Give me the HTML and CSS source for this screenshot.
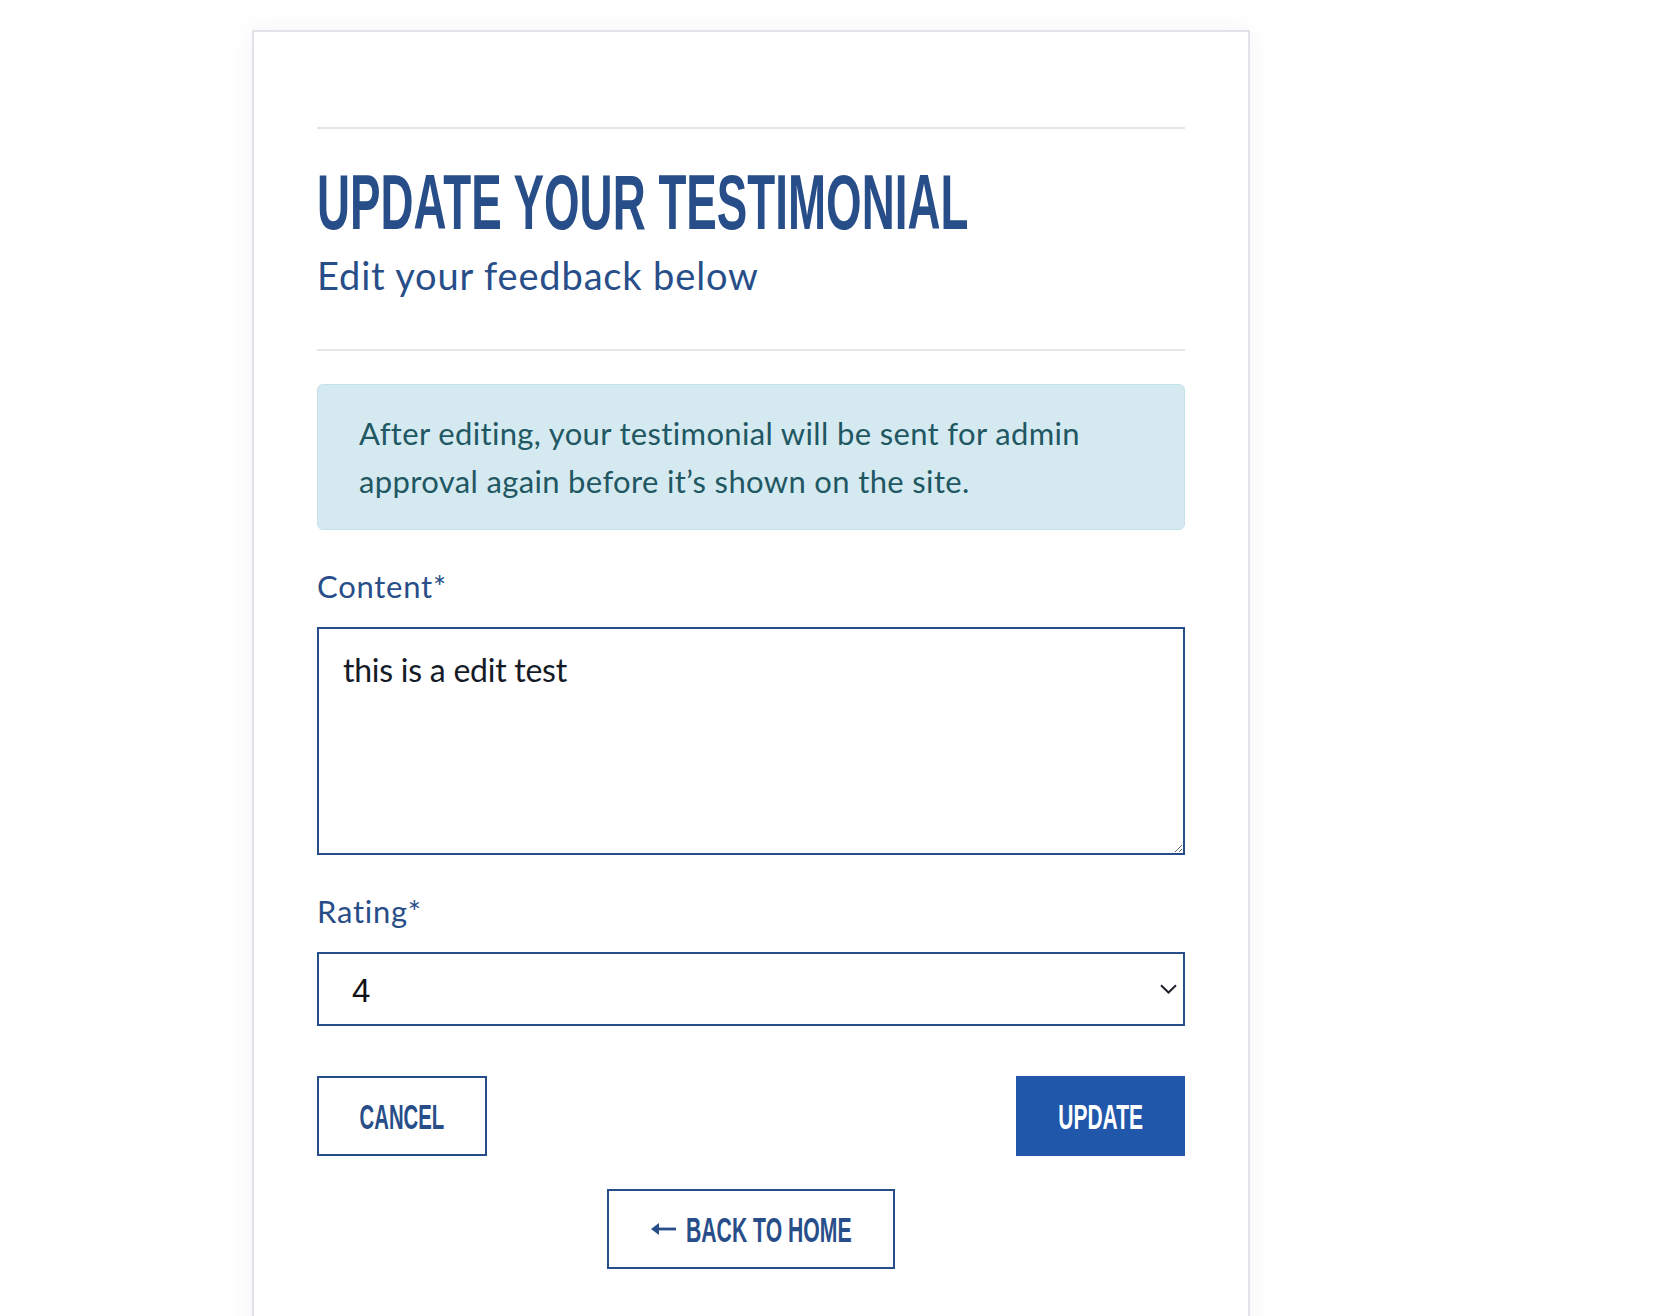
FILE: index.html
```html
<!DOCTYPE html>
<html lang="en">
<head>
<meta charset="utf-8">
<title>Update your testimonial</title>
<link rel="stylesheet" href="styles.css">
</head>
<body>
<main class="page">
  <section class="card">
    <hr class="rule">
    <h1 class="title"><span class="condensed">UPDATE YOUR TESTIMONIAL</span></h1>
    <p class="subtitle">Edit your feedback below</p>
    <hr class="rule rule-bottom">
    <div class="alert">After editing, your testimonial will be sent for admin approval again before it’s shown on the site.</div>
    <form class="form">
      <div class="field">
        <label class="label" for="content">Content*</label>
        <textarea class="textarea" id="content">this is a edit test</textarea>
      </div>
      <div class="field">
        <label class="label" for="rating">Rating*</label>
        <div class="select-wrap">
          <select class="select" id="rating">
            <option>1</option>
            <option>2</option>
            <option>3</option>
            <option selected>4</option>
            <option>5</option>
          </select>
          <svg class="chevron" width="17" height="10" viewBox="0 0 17 10" aria-hidden="true"><polyline points="1,1.2 8.5,8.5 16,1.2" fill="none" stroke="#1f2229" stroke-width="2"/></svg>
        </div>
      </div>
      <div class="actions">
        <a class="btn btn-cancel" href="#"><span class="condensed">CANCEL</span></a>
        <button class="btn btn-update" type="button"><span class="condensed">UPDATE</span></button>
      </div>
      <div class="back-row">
        <a class="btn btn-back" href="#">
          <svg class="arrow" width="25" height="14" viewBox="0 0 25 14" aria-hidden="true"><polygon points="0,7 8,1 8,13" fill="#284e89"/><rect x="6" y="5.6" width="19" height="2.8" fill="#284e89"/></svg>
          <span class="condensed back-text">BACK TO HOME</span>
        </a>
      </div>
    </form>
  </section>
</main>
</body>
</html>
```

FILE: styles.css
```css
html, body {
  margin: 0;
  padding: 0;
  background: #ffffff;
}

body {
  font-family: Lato, "Noto Sans", sans-serif;
  color: #284e89;
}

.page {
  max-width: 1170px;
  margin: 0 auto;
  padding-top: 30px;
}

.card {
  width: 998px;
  box-sizing: border-box;
  background: #ffffff;
  border: 2px solid #e0e3e8;
  box-shadow: 0 0 26px rgba(30, 40, 60, 0.05);
  padding: 95px 63px 120px;
}

.rule {
  border: 0;
  height: 2px;
  background: #e4e5e6;
  margin: 0;
}

.rule-bottom {
  margin-top: 52px;
}

.title {
  margin: 36px 0 0;
  font-family: "Liberation Sans", Arial, sans-serif;
  font-weight: 700;
  font-size: 77px;
  line-height: 75px;
  color: #284e89;
  white-space: nowrap;
}

.title .condensed {
  display: inline-block;
  transform: scaleX(0.594);
  transform-origin: left center;
}

.subtitle {
  margin: 14px 0 0;
  font-family: Lato, sans-serif;
  font-weight: 400;
  font-size: 38px;
  line-height: 43px;
  letter-spacing: 0.85px;
  color: #284e89;
}

.alert {
  margin-top: 33px;
  background: #d5eaf0;
  border: 1px solid #c3e1e9;
  border-radius: 6px;
  color: #1f5763;
  font-size: 31px;
  line-height: 48px;
  letter-spacing: 0.35px;
  padding: 24px 41px;
}

.field {
  margin-top: 34px;
}

.label {
  display: block;
  font-size: 31px;
  line-height: 45px;
  letter-spacing: 0.75px;
  color: #284e89;
  margin-bottom: 18px;
}

.textarea {
  display: block;
  width: 100%;
  height: 228px;
  box-sizing: border-box;
  margin: 0;
  border: 2px solid #284e89;
  border-radius: 0;
  padding: 17px 24px 13px;
  font-family: Lato, sans-serif;
  font-size: 32px;
  line-height: 48px;
  letter-spacing: -0.25px;
  color: #141a26;
  background: #ffffff;
  resize: vertical;
  outline: none;
}

.select-wrap {
  position: relative;
}

.select {
  display: block;
  width: 100%;
  height: 74px;
  box-sizing: border-box;
  margin: 0;
  -webkit-appearance: none;
  appearance: none;
  border: 2px solid #284e89;
  border-radius: 0;
  background: #ffffff;
  padding: 2px 60px 0 33px;
  font-family: "Liberation Sans", Arial, sans-serif;
  font-size: 33px;
  color: #111111;
  outline: none;
}

.chevron {
  position: absolute;
  right: 8px;
  top: 50%;
  transform: translateY(-50%);
  pointer-events: none;
}

.actions {
  display: flex;
  justify-content: space-between;
  margin-top: 50px;
}

.btn {
  display: flex;
  align-items: center;
  justify-content: center;
  height: 80px;
  box-sizing: border-box;
  border: 2px solid #284e89;
  border-radius: 0;
  background: #ffffff;
  color: #284e89;
  font-family: "Liberation Sans", Arial, sans-serif;
  font-weight: 700;
  font-size: 35px;
  line-height: 1;
  text-decoration: none;
  white-space: nowrap;
  padding: 0;
  margin: 0;
  cursor: pointer;
}

.btn .condensed {
  display: inline-block;
  transform: scaleX(0.58);
  transform-origin: center center;
}

.btn-cancel {
  width: 170px;
}

.btn-update {
  width: 169px;
  background: #2157aa;
  border-color: #2157aa;
  color: #ffffff;
}

.btn-update .condensed {
  transform: scaleX(0.6);
}

.back-row {
  display: flex;
  justify-content: center;
  margin-top: 33px;
}

.btn-back {
  width: 288px;
}

.arrow {
  flex: none;
  margin-right: 11px;
}

.btn-back .back-text {
  transform: scaleX(0.605);
  margin: 0 -55px;
}
```
